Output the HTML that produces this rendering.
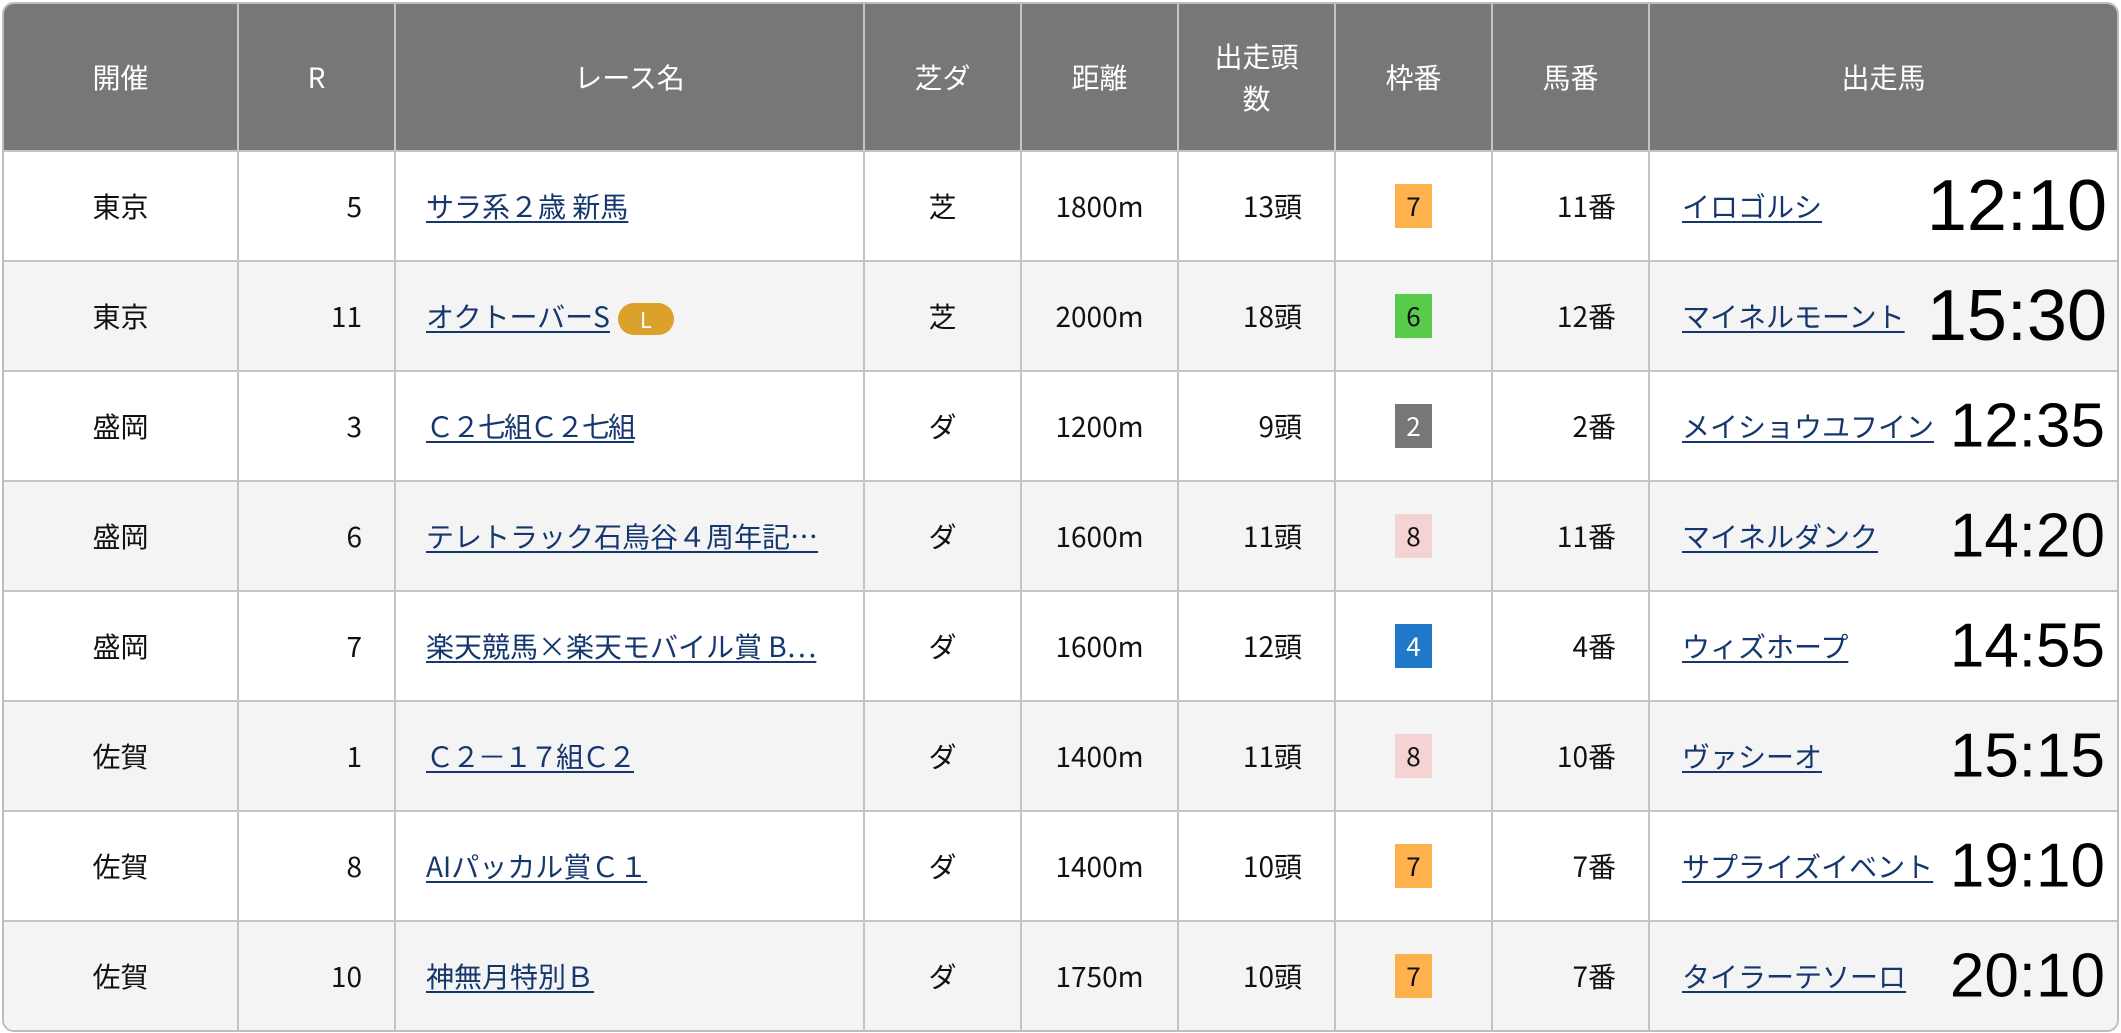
<!DOCTYPE html>
<html><head><meta charset="utf-8"><style>
html,body{margin:0;padding:0;background:#fff;width:2121px;height:1033px;overflow:hidden}
body{font-family:"Noto Sans CJK JP","Liberation Sans",sans-serif;font-size:28px;color:#111}
table{position:absolute;left:2px;top:2px;width:2117px;border-collapse:separate;border-spacing:0;table-layout:fixed;border:2px solid #bdbdbd;border-radius:12px;overflow:hidden}
th,td{border-right:2px solid #c4c4c4;border-bottom:2px solid #c4c4c4;padding:0 32px;white-space:nowrap;overflow:hidden}
th:last-child,td:last-child{border-right:none}
tr:last-child td{border-bottom:none}
th{background:#777;color:#fff;font-weight:normal;height:146px;text-align:center;line-height:42px}
td{height:108px}
tbody tr:nth-child(even) td{background:#f4f4f4}
.c{text-align:center}.r{text-align:right}
td:nth-child(3){padding-left:30px}
a{color:#15376e;text-decoration:underline;text-underline-offset:4px}
.fw{letter-spacing:-2px}
.w{display:inline-block;width:37px;height:44px;line-height:44px;text-align:center;font-size:26px}
.L{display:inline-block;background:#dba12b;color:#fff;border-radius:18px;padding:0 22px;height:32px;line-height:32px;font-size:22px;vertical-align:middle;margin-left:8px}
.h{position:relative}
.t{position:absolute;right:12px;top:50%;transform:translateY(-50%);font-family:"Liberation Sans",Arial,sans-serif;font-size:62px;color:#000}
.big{font-size:72px;right:10px}
</style></head><body>
<table>
<colgroup><col style="width:235px"><col style="width:157px"><col style="width:469px"><col style="width:157px"><col style="width:157px"><col style="width:157px"><col style="width:157px"><col style="width:157px"><col></colgroup>
<thead><tr><th>開催</th><th>R</th><th>レース名</th><th>芝ダ</th><th>距離</th><th>出走頭<br>数</th><th>枠番</th><th>馬番</th><th>出走馬</th></tr></thead>
<tbody>
<tr><td class="c">東京</td><td class="r">5</td><td><a>サラ系２歳 新馬</a></td><td class="c">芝</td><td class="c">1800m</td><td class="r">13頭</td><td class="c"><span class="w" style="background:#ffb14e">7</span></td><td class="r">11番</td><td class="h"><a>イロゴルシ</a><span class="t big">12:10</span></td></tr>
<tr><td class="c">東京</td><td class="r">11</td><td><a>オクトーバーS</a><span class="L">L</span></td><td class="c">芝</td><td class="c">2000m</td><td class="r">18頭</td><td class="c"><span class="w" style="background:#58cc4a">6</span></td><td class="r">12番</td><td class="h"><a>マイネルモーント</a><span class="t big">15:30</span></td></tr>
<tr><td class="c">盛岡</td><td class="r">3</td><td><a class="fw">Ｃ２七組Ｃ２七組</a></td><td class="c">ダ</td><td class="c">1200m</td><td class="r">9頭</td><td class="c"><span class="w" style="background:#777;color:#fff">2</span></td><td class="r">2番</td><td class="h"><a>メイショウユフイン</a><span class="t">12:35</span></td></tr>
<tr><td class="c">盛岡</td><td class="r">6</td><td><a>テレトラック石鳥谷４周年記…</a></td><td class="c">ダ</td><td class="c">1600m</td><td class="r">11頭</td><td class="c"><span class="w" style="background:#f6d3d3">8</span></td><td class="r">11番</td><td class="h"><a>マイネルダンク</a><span class="t">14:20</span></td></tr>
<tr><td class="c">盛岡</td><td class="r">7</td><td><a>楽天競馬×楽天モバイル賞 B…</a></td><td class="c">ダ</td><td class="c">1600m</td><td class="r">12頭</td><td class="c"><span class="w" style="background:#1f78c8;color:#fff">4</span></td><td class="r">4番</td><td class="h"><a>ウィズホープ</a><span class="t">14:55</span></td></tr>
<tr><td class="c">佐賀</td><td class="r">1</td><td><a class="fw">Ｃ２－１７組Ｃ２</a></td><td class="c">ダ</td><td class="c">1400m</td><td class="r">11頭</td><td class="c"><span class="w" style="background:#f6d3d3">8</span></td><td class="r">10番</td><td class="h"><a>ヴァシーオ</a><span class="t">15:15</span></td></tr>
<tr><td class="c">佐賀</td><td class="r">8</td><td><a>AIパッカル賞Ｃ１</a></td><td class="c">ダ</td><td class="c">1400m</td><td class="r">10頭</td><td class="c"><span class="w" style="background:#ffb14e">7</span></td><td class="r">7番</td><td class="h"><a>サプライズイベント</a><span class="t">19:10</span></td></tr>
<tr><td class="c">佐賀</td><td class="r">10</td><td><a>神無月特別Ｂ</a></td><td class="c">ダ</td><td class="c">1750m</td><td class="r">10頭</td><td class="c"><span class="w" style="background:#ffb14e">7</span></td><td class="r">7番</td><td class="h"><a>タイラーテソーロ</a><span class="t">20:10</span></td></tr>
</tbody></table>
</body></html>
